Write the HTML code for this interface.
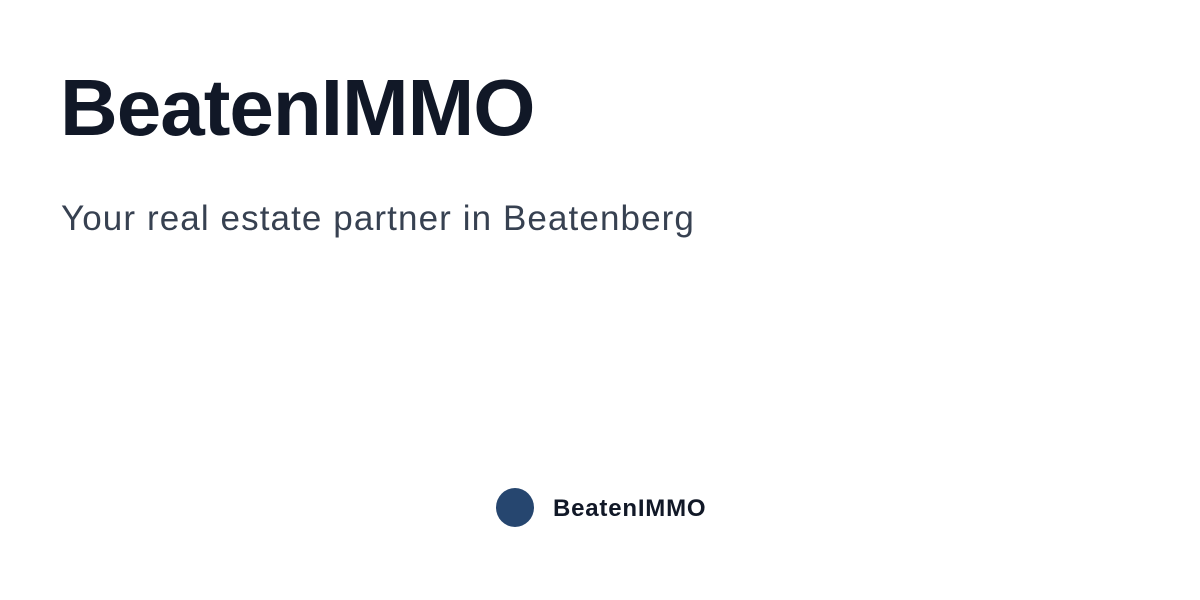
<!DOCTYPE html>
<html><head><style>
html,body{margin:0;padding:0;width:1200px;height:600px;background:#fff;overflow:hidden;font-family:"Liberation Sans",sans-serif}
.t{position:absolute;left:60px;top:63px;font-size:80px;font-weight:bold;color:#111827;letter-spacing:-1px;line-height:90px;white-space:nowrap}
.s{position:absolute;left:61px;top:197px;font-size:35px;color:#374151;letter-spacing:1.1px;line-height:44px;white-space:nowrap}
.c{position:absolute;left:496px;top:488px;width:38px;height:39px;border-radius:50%;background:#26466f}
.f{position:absolute;left:553px;top:494px;font-size:24px;font-weight:bold;color:#111827;letter-spacing:0.8px;line-height:30px;white-space:nowrap}
</style></head><body>
<div class="t">BeatenIMMO</div>
<div class="s">Your real estate partner in Beatenberg</div>
<div class="c"></div>
<div class="f">BeatenIMMO</div>
</body></html>
